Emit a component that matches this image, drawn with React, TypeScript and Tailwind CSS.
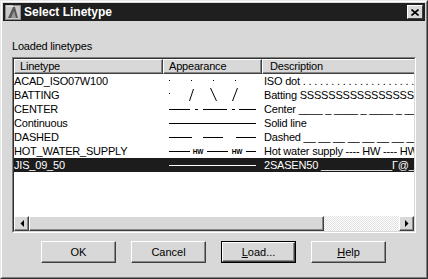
import React from "react";

type Row = { name: string; kind: string; desc: string };

const rows: Row[] = [
    { name: "ACAD_ISO07W100", kind: "dot", desc: "ISO dot . . . . . . . . . . . . . . . . . . . . . . . ." },
    { name: "BATTING", kind: "batting", desc: "Batting SSSSSSSSSSSSSSSSSSSSSSSSSSSSSSSSSS" },
    { name: "CENTER", kind: "center", desc: "Center ____ _ ____ _ ____ _ ____ _ ____ _ ____" },
    { name: "Continuous", kind: "solid", desc: "Solid line" },
    { name: "DASHED", kind: "dashed", desc: "Dashed __ __ __ __ __ __ __ __ __ __ __ __ __" },
    { name: "HOT_WATER_SUPPLY", kind: "hw", desc: "Hot water supply ---- HW ---- HW ---- HW ----" },
    { name: "JIS_09_50", kind: "solid", desc: "2SASEN50 ____________Γ@_" },
];

const Seg = ({ a, b }: { a: number; b: number }) => (
    <line x1={a} y1={7.5} x2={b} y2={7.5} stroke="currentColor" strokeWidth={1} shapeRendering="crispEdges" />
);

const Appearance: React.FC<{ kind: string }> = ({ kind }) => (
    <svg width="99" height="14" viewBox="0 0 99 14" className="block">
        {kind === "dot" &&
            [6, 28, 50, 72].map((x) => <rect key={x} x={x} y={6} width={1} height={1} fill="currentColor" />)}
        {kind === "batting" && (
            <g stroke="currentColor" strokeWidth={1} fill="none">
                <rect x={6} y={5} width={1} height={1} fill="currentColor" stroke="none" />
                <line x1={30.5} y1={1} x2={26.5} y2={13} />
                <line x1={47.5} y1={0} x2={53.5} y2={13} />
                <line x1={74.5} y1={0} x2={69.5} y2={13} />
            </g>
        )}
        {kind === "center" && (
            <>
                <Seg a={6} b={27} />
                <Seg a={32} b={35} />
                <Seg a={40} b={64} />
                <Seg a={69} b={72} />
                <Seg a={76} b={93} />
            </>
        )}
        {kind === "solid" && <Seg a={6} b={93} />}
        {kind === "dashed" && (
            <>
                <Seg a={6} b={29} />
                <Seg a={40} b={60} />
                <Seg a={73} b={93} />
            </>
        )}
        {kind === "hw" && (
            <>
                <Seg a={6} b={27} />
                <text x={35} y={10} fontSize={6.5} fontWeight="bold" textAnchor="middle" fill="currentColor" fontFamily="Liberation Sans, Arial, sans-serif">
                    HW
                </text>
                <Seg a={44} b={65} />
                <text x={74} y={10} fontSize={6.5} fontWeight="bold" textAnchor="middle" fill="currentColor" fontFamily="Liberation Sans, Arial, sans-serif">
                    HW
                </text>
                <Seg a={83} b={93} />
            </>
        )}
    </svg>
);

const raised = "border border-t-white border-l-white border-r-[#404040] border-b-[#404040] shadow-[inset_-1px_-1px_0_#888888]";

const Button: React.FC<{ label: React.ReactNode; def?: boolean }> = ({ label, def }) => (
    <div className={`w-[75px] h-[22px] ${def ? "border border-black" : ""}`}>
        <div className={`h-full bg-[#d8d8d8] ${raised} flex items-center justify-center text-[11px] text-black`}>
            {label}
        </div>
    </div>
);

const Arrow: React.FC<{ dir: "l" | "r" }> = ({ dir }) => (
    <div className={`w-[15px] h-full bg-[#d8d8d8] ${raised} flex items-center justify-center`}>
        <svg width="4" height="7" viewBox="0 0 4 7">
            {dir === "l" ? <polygon points="4,0 4,7 0.5,3.5" fill="#000" /> : <polygon points="0,0 0,7 3.5,3.5" fill="#000" />}
        </svg>
    </div>
);

export default function App() {
    return (
        <div className="w-[428px] h-[279px] overflow-hidden font-['Liberation_Sans',Arial,sans-serif] border border-t-[#e8e8e8] border-l-[#e8e8e8] border-r-[#303030] border-b-[#303030] bg-[#d8d8d8]">
            <div className="h-full flex flex-col border border-t-white border-l-white border-r-[#808080] border-b-[#808080] p-px">
                {/* title bar */}
                <div className="h-[18px] bg-[#1f1f1f] flex items-center pl-[2px] pr-[2px]">
                    <svg width="16" height="15" viewBox="0 0 16 15" className="shrink-0">
                        <rect x="0" y="0" width="16" height="15" fill="#8a8a8a" />
                        <rect x="1" y="1" width="14" height="13" fill="#c8c8c8" />
                        <polygon points="3,13 8,2 10,2 13,13" fill="#5a5a5a" />
                        <polygon points="6,13 9,6 11,13" fill="#9a9a9a" />
                        <line x1="1" y1="1" x2="8" y2="1" stroke="#fff" />
                    </svg>
                    <span className="ml-[3px] text-white font-bold text-[12px] leading-none">Select Linetype</span>
                    <div className="ml-auto w-[16px] h-[14px] bg-[#d8d8d8] border border-t-white border-l-white border-r-[#404040] border-b-[#404040] flex items-center justify-center">
                        <svg width="8" height="7" viewBox="0 0 8 7">
                            <path d="M0.5 0.5 L7.5 6.5 M7.5 0.5 L0.5 6.5" stroke="#000" strokeWidth="1.6" />
                        </svg>
                    </div>
                </div>

                {/* body */}
                <div className="flex-1 flex flex-col pl-[9px]">
                    <div className="mt-[19px] h-[13px] text-[11px] leading-[13px] text-black tracking-[-0.2px]">Loaded linetypes</div>
                    <div className="mt-[4px] w-[404px] h-[176px] border border-t-[#808080] border-l-[#808080] border-r-white border-b-white">
                        <div className="h-full flex flex-col bg-white border border-t-[#303030] border-l-[#303030] border-r-[#d8d8d8] border-b-[#d8d8d8] overflow-hidden">
                            {/* header */}
                            <div className="flex h-[15px] shrink-0 text-[11px] text-black tracking-[-0.2px]">
                                <div className={`w-[149px] shrink-0 bg-[#d8d8d8] ${raised} pl-[5px] leading-[13px]`}>Linetype</div>
                                <div className={`w-[99px] shrink-0 bg-[#d8d8d8] ${raised} pl-[5px] leading-[13px]`}>Appearance</div>
                                <div className={`w-[170px] shrink-0 bg-[#d8d8d8] ${raised} pl-[7px] leading-[13px]`}>Description</div>
                            </div>
                            {/* rows */}
                            {rows.map((r, idx) => {
                                const sel = idx === rows.length - 1;
                                return (
                                    <div
                                        key={r.name}
                                        className={`flex h-[14px] shrink-0 text-[11px] leading-[14px] tracking-[-0.2px] whitespace-nowrap ${sel ? "bg-[#1c1c1c] text-white" : "text-black"}`}
                                    >
                                        <div className="w-[149px] shrink-0 overflow-hidden">{r.name}</div>
                                        <div className="w-[99px] shrink-0">
                                            <Appearance kind={r.kind} />
                                        </div>
                                        <div className="flex-1 overflow-hidden pl-[2px]">{r.desc}</div>
                                    </div>
                                );
                            })}
                            <div className="flex-1" />
                            {/* horizontal scrollbar */}
                            <div className="flex h-[15px] shrink-0">
                                <Arrow dir="l" />
                                <div className={`w-[295px] shrink-0 bg-[#d8d8d8] ${raised}`} />
                                <div className="flex-1 bg-[repeating-conic-gradient(#ffffff_0_25%,#e0e0e0_0_50%)] bg-[length:2px_2px]" />
                                <Arrow dir="r" />
                            </div>
                        </div>
                    </div>

                    {/* buttons */}
                    <div className="mt-[8px] flex gap-[15px] pl-[29px]">
                        <Button label="OK" />
                        <Button label="Cancel" />
                        <Button
                            def
                            label={
                                <span>
                                    <span className="underline">L</span>oad...
                                </span>
                            }
                        />
                        <Button
                            label={
                                <span>
                                    <span className="underline">H</span>elp
                                </span>
                            }
                        />
                    </div>
                </div>
            </div>
        </div>
    );
}
